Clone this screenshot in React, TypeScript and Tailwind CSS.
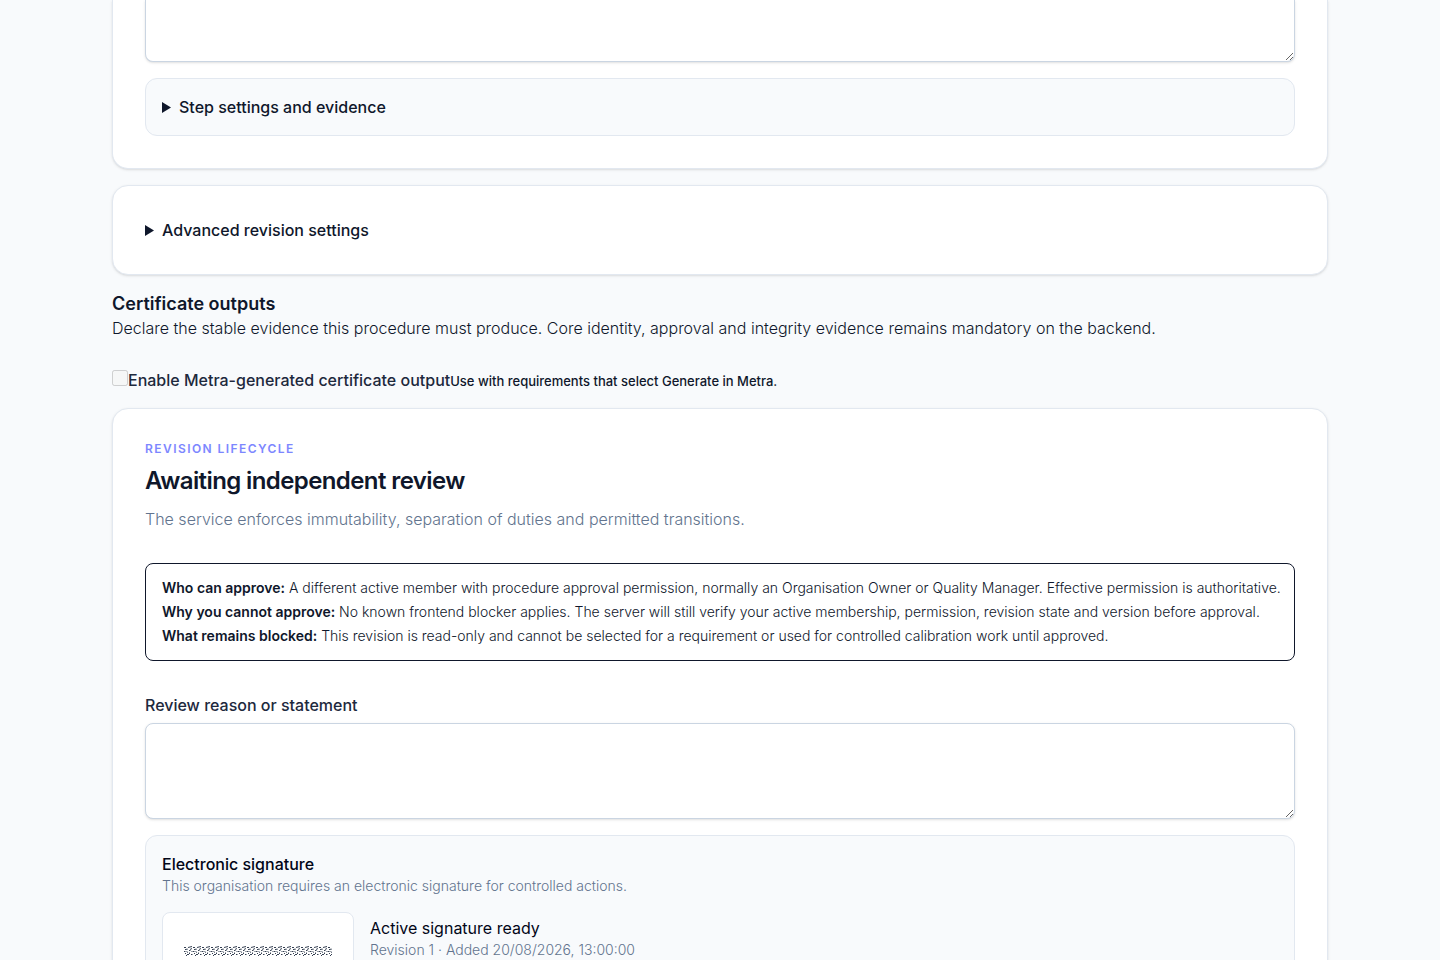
import React from "react";

const approvalNotes = [
  {
    label: "Who can approve:",
    text: "A different active member with procedure approval permission, normally an Organisation Owner or Quality Manager. Effective permission is authoritative.",
  },
  {
    label: "Why you cannot approve:",
    text: "No known frontend blocker applies. The server will still verify your active membership, permission, revision state and version before approval.",
  },
  {
    label: "What remains blocked:",
    text: "This revision is read-only and cannot be selected for a requirement or used for controlled calibration work until approved.",
  },
];

function Disclosure({ title }: { title: string }) {
  return (
    <details>
      <summary className="flex h-6 cursor-pointer list-none items-center gap-2 font-medium">
        <svg width="9" height="11" viewBox="0 0 9 11" fill="currentColor">
          <path d="M0 0L9 5.5L0 11Z" />
        </svg>
        {title}
      </summary>
    </details>
  );
}

function SignatureImage() {
  return (
    <svg
      className="h-2.5 w-[148px] text-slate-800"
      viewBox="0 0 148 10"
      fill="none"
      stroke="currentColor"
      aria-label="Signature"
    >
      <defs>
        <pattern id="stroke" width="9" height="10" patternUnits="userSpaceOnUse">
          <path
            strokeWidth="0.9"
            d="M0 1.5H2M4 1.5L8 0.5M1 3.5H2.5M3 2.5V4M6 3.5L8 2.5M0 5.5H1.5M2.5 5.5L4 6.5M5 4.5H6.5M7.5 5L8.5 6M1 7.5H2M3 8.5H5M5.5 6.5V8M7 8.5H8.5M2 9.5H3"
          />
        </pattern>
      </defs>
      <rect width="148" height="10" fill="url(#stroke)" stroke="none" />
    </svg>
  );
}

export default function App() {
  return (
    <div className="h-screen overflow-hidden bg-slate-50 font-['Inter',sans-serif] text-base text-slate-900">
      <main className="mx-auto flex max-w-[1216px] flex-col gap-4">
        <section className="flex flex-col gap-4 rounded-b-2xl border border-t-0 border-slate-200 bg-white px-8 pb-8 shadow-sm">
          <textarea
            aria-label="Step instructions"
            className="block h-[62px] w-full rounded-b-lg border border-t-0 border-slate-300 bg-white shadow-sm"
          />
          <div className="rounded-xl border border-slate-200 bg-slate-50 p-4">
            <Disclosure title="Step settings and evidence" />
          </div>
        </section>

        <section className="rounded-2xl border border-slate-200 bg-white p-8 shadow-sm">
          <Disclosure title="Advanced revision settings" />
        </section>

        <section>
          <h2 className="text-lg leading-[25px] font-semibold">Certificate outputs</h2>
          <p className="font-light">
            Declare the stable evidence this procedure must produce. Core identity, approval and
            integrity evidence remains mandatory on the backend.
          </p>
          <label className="mt-7 flex items-baseline font-medium text-slate-800">
            <input type="checkbox" disabled className="size-4" />
            <span>Enable Metra-generated certificate output</span>
            <small className="text-[13px] text-slate-900">
              Use with requirements that select Generate in Metra.
            </small>
          </label>
        </section>

        <section className="rounded-2xl border border-slate-200 bg-white p-8 shadow-sm">
          <p className="text-xs font-semibold tracking-[0.12em] text-indigo-400 uppercase">
            Revision lifecycle
          </p>
          <h2 className="mt-2 text-2xl font-semibold tracking-tight">
            Awaiting independent review
          </h2>
          <p className="mt-2.5 font-light text-slate-500">
            The service enforces immutability, separation of duties and permitted transitions.
          </p>

          <div className="mt-8 rounded-lg border border-slate-900 py-3 pr-3 pl-4 text-sm leading-6 font-light">
            {approvalNotes.map((note) => (
              <p key={note.label}>
                <strong className="font-semibold">{note.label}</strong> {note.text}
              </p>
            ))}
          </div>

          <label htmlFor="reason" className="mt-8 block font-medium text-slate-800">
            Review reason or statement
          </label>
          <textarea
            id="reason"
            className="mt-1.5 block h-24 w-full rounded-lg border border-slate-300 bg-white shadow-sm"
          />

          <div className="mt-4 rounded-xl border border-slate-200 bg-slate-50 p-4">
            <h3 className="font-medium text-slate-950">Electronic signature</h3>
            <p className="text-sm font-light text-slate-500">
              This organisation requires an electronic signature for controlled actions.
            </p>
            <div className="mt-4 flex items-start gap-4">
              <div className="flex h-[78px] w-48 items-center justify-center rounded-lg border border-slate-200 bg-white">
                <SignatureImage />
              </div>
              <div className="pt-1">
                <p className="text-slate-950">Active signature ready</p>
                <p className="text-sm font-light text-slate-500">
                  Revision 1 · Added 20/08/2026, 13:00:00
                </p>
              </div>
            </div>
          </div>
        </section>
      </main>
    </div>
  );
}
